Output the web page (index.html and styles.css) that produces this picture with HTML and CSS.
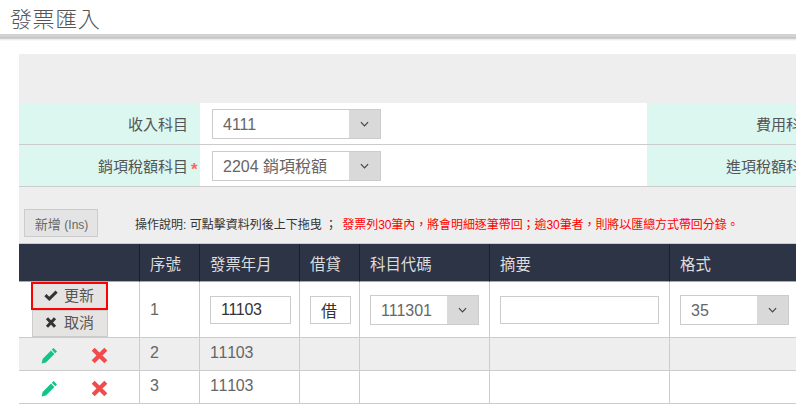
FILE: index.html
```html
<!DOCTYPE html>
<html lang="zh-Hant">
<head>
<meta charset="utf-8">
<title>發票匯入</title>
<link rel="stylesheet" href="styles.css">
</head>
<body>
<header class="page-head"><h1>發票匯入</h1></header>
<main class="panel">
  <div class="panel-top"></div>
  <div class="form-row">
    <div class="label">收入科目</div>
    <div class="field">
      <div class="select sel-wide"><span class="val">4111</span><span class="arrow"><svg viewBox="0 0 10 6" width="9" height="6"><path d="M1 1l4 4 4-4" fill="none" stroke="#444" stroke-width="1.3"/></svg></span></div>
    </div>
    <div class="label">費用科目</div>
    <div class="field"></div>
  </div>
  <div class="form-row">
    <div class="label">銷項稅額科目<span class="req">*</span></div>
    <div class="field">
      <div class="select sel-wide"><span class="val">2204 銷項稅額</span><span class="arrow"><svg viewBox="0 0 10 6" width="9" height="6"><path d="M1 1l4 4 4-4" fill="none" stroke="#444" stroke-width="1.3"/></svg></span></div>
    </div>
    <div class="label">進項稅額科目</div>
    <div class="field"></div>
  </div>
  <div class="toolbar">
    <button class="btn-add">新增 <span class="ins">(Ins)</span></button>
    <p class="note">操作說明: 可點擊資料列後上下拖曳 ； <span class="warn">發票列30筆內，將會明細逐筆帶回；逾30筆者，則將以匯總方式帶回分錄。</span></p>
  </div>
  <table class="grid">
    <colgroup>
      <col class="c-act"><col class="c-no"><col class="c-ym"><col class="c-dc"><col class="c-acc"><col class="c-memo"><col class="c-fmt">
    </colgroup>
    <thead>
      <tr><th></th><th>序號</th><th>發票年月</th><th>借貸</th><th>科目代碼</th><th>摘要</th><th>格式</th></tr>
    </thead>
    <tbody>
      <tr class="edit">
        <td class="act-edit">
          <button class="btn-act btn-update"><svg class="btn-ico" viewBox="0 0 14 11" width="14" height="11"><path d="M1.4 5.2l3.9 3.7L12.6 1.6" fill="none" stroke="#333" stroke-width="3"/></svg>更新</button>
          <button class="btn-act btn-cancel"><svg class="btn-ico" viewBox="0 0 14 11" width="14" height="11"><path d="M3 1.2l8 8.6M11 1.2l-8 8.6" fill="none" stroke="#333" stroke-width="3"/></svg>取消</button>
        </td>
        <td class="num">1</td>
        <td><input class="inp inp-ym" value="11103"></td>
        <td><input class="inp inp-dc" value="借"></td>
        <td><div class="select sel-acc"><span class="val">111301</span><span class="arrow"><svg viewBox="0 0 10 6" width="9" height="6"><path d="M1 1l4 4 4-4" fill="none" stroke="#444" stroke-width="1.3"/></svg></span></div></td>
        <td><input class="inp inp-memo" value=""></td>
        <td><div class="select sel-fmt"><span class="val">35</span><span class="arrow"><svg viewBox="0 0 10 6" width="9" height="6"><path d="M1 1l4 4 4-4" fill="none" stroke="#444" stroke-width="1.3"/></svg></span></div></td>
      </tr>
      <tr class="alt">
        <td class="acts"><svg class="ico" viewBox="0 0 17 17" width="17" height="17"><path d="M12.6 1l3.4 3.4-1.8 1.8-3.4-3.4zM10 3.6l3.4 3.4-8.4 8.4-4.4 1 1-4.4z" fill="#12c587"/></svg><svg class="ico" viewBox="0 0 17 17" width="17" height="17"><path d="M2.2 2.2l12.6 12.6M14.8 2.2L2.2 14.8" fill="none" stroke="#f04c4c" stroke-width="4.2"/></svg></td>
        <td class="num">2</td><td class="num">11103</td><td></td><td></td><td></td><td></td>
      </tr>
      <tr>
        <td class="acts"><svg class="ico" viewBox="0 0 17 17" width="17" height="17"><path d="M12.6 1l3.4 3.4-1.8 1.8-3.4-3.4zM10 3.6l3.4 3.4-8.4 8.4-4.4 1 1-4.4z" fill="#12c587"/></svg><svg class="ico" viewBox="0 0 17 17" width="17" height="17"><path d="M2.2 2.2l12.6 12.6M14.8 2.2L2.2 14.8" fill="none" stroke="#f04c4c" stroke-width="4.2"/></svg></td>
        <td class="num">3</td><td class="num">11103</td><td></td><td></td><td></td><td></td>
      </tr>
    </tbody>
  </table>
</main>
</body>
</html>
```
FILE: styles.css
```css
* { box-sizing: border-box; }
html, body { margin: 0; height: 404px; overflow: hidden; background: #fff; }
body { font-family: "Liberation Sans", "Noto Sans CJK TC", sans-serif; color: #555; font-size: 14px; }
.page-head { height: 41px; padding: 6px 0 0 10px; background: linear-gradient(#fff 34px, #d2d2d2 34px, #d2d2d2 37px, #b8b8b8 38px, #e6e6e6 39px, #fff 41px); }
.page-head h1 { margin: 0; font-size: 22px; line-height: 28px; font-weight: 300; color: #555; letter-spacing: 0.6px; }
.panel { margin: 13px 0 0 19px; width: 1000px; background: #eee; }
.panel-top { height: 49px; }
.form-row { display: grid; grid-template-columns: 181px 447px 181px 191px; grid-template-rows: 41px; height: 42px; border-bottom: 1px solid #ccc; background: #fff; }
.label { background: #dcf7f0; text-align: right; padding-right: 12px; line-height: 43px; color: #555; font-size: 15px; white-space: nowrap; }
.req { color: #f66; margin: 0 -9px 0 3px; display: inline-block; width: 6px; font-size: 17px; font-weight: 700; vertical-align: -3px; line-height: 1; }
.field { padding: 6px 0 0 12px; }
.select { display: flex; height: 30px; border: 1px solid #ccc; background: #fff; }
.val { flex: 1; padding-left: 10px; line-height: 29px; font-size: 16px; white-space: nowrap; color: #666; }
.arrow { width: 31px; background: #d9d9d9; display: flex; align-items: center; justify-content: center; }
.sel-wide { width: 169px; }
.toolbar { display: flex; align-items: center; height: 57px; padding: 16px 0 0 5px; border-bottom: 1px solid #ccc; background: #eee; }
.btn-add { width: 74px; height: 28px; padding: 0 0 0 1px; background: #e4e4e4; border: 1px solid #ccc; font: inherit; font-size: 13px; color: #666; }
.ins { font-size: 12px; }
.note { margin: 0 0 0 37px; font-size: 12px; color: #333; white-space: nowrap; }
.warn { color: #f00; letter-spacing: -0.07px; margin-left: 2px; }
.grid { table-layout: fixed; border-collapse: separate; border-spacing: 0; width: 1000px; background: #fff; }
.c-act { width: 121px; } .c-no { width: 60px; } .c-ym { width: 100px; } .c-dc { width: 60px; } .c-acc { width: 130px; } .c-memo { width: 180px; } .c-fmt { width: 349px; }
.grid th { height: 38px; background: #2d3446; color: #ddd; font-weight: 400; font-size: 15.4px; text-align: left; padding: 0 0 0 10px; border-right: 1px solid #1a2030; border-bottom: 1px solid #aaa; }
.grid td { padding: 0 0 3px 10px; border-right: 1px solid #ccc; border-bottom: 1px solid #ccc; font-size: 16px; color: #666; height: 33px; }
.grid td.num { font-kerning: none; letter-spacing: -0.3px; }
.grid th:first-child, .grid td:first-child { padding: 0; }
.grid tr.edit td { height: 56px; padding-bottom: 0; }
.grid tr.edit td.num { padding-bottom: 0; }
.alt td { background: #eee; }
.grid tr.edit td.act-edit { vertical-align: top; line-height: 0; }
.btn-act { display: flex; align-items: center; width: 76px; height: 28px; margin-left: 13px; padding: 0 0 2px 11px; background: #e6e4e2; border: 1px solid #ccc; font: inherit; font-size: 15px; line-height: 1; color: #555; }
.btn-ico { margin-right: 6px; }
.btn-update { width: 77px; height: 28px; margin-left: 12px; border: 2px solid #f00; }
.btn-cancel { height: 27px; }
.acts { white-space: nowrap; vertical-align: top; }
.ico { display: inline-block; margin: 9px 0 0 22px; }
.ico + .ico { margin-left: 33px; }
.inp { height: 28px; border: 1px solid #ccc; background: #fff; font: inherit; font-size: 16px; letter-spacing: -0.3px; color: #333; padding: 0 10px; display: block; }
.inp-ym { width: 81px; }
.inp-dc { width: 41px; font-size: 16px; letter-spacing: 0; }
.inp-memo { width: 159px; }
.sel-acc { width: 109px; }
.sel-fmt { width: 109px; }
```
